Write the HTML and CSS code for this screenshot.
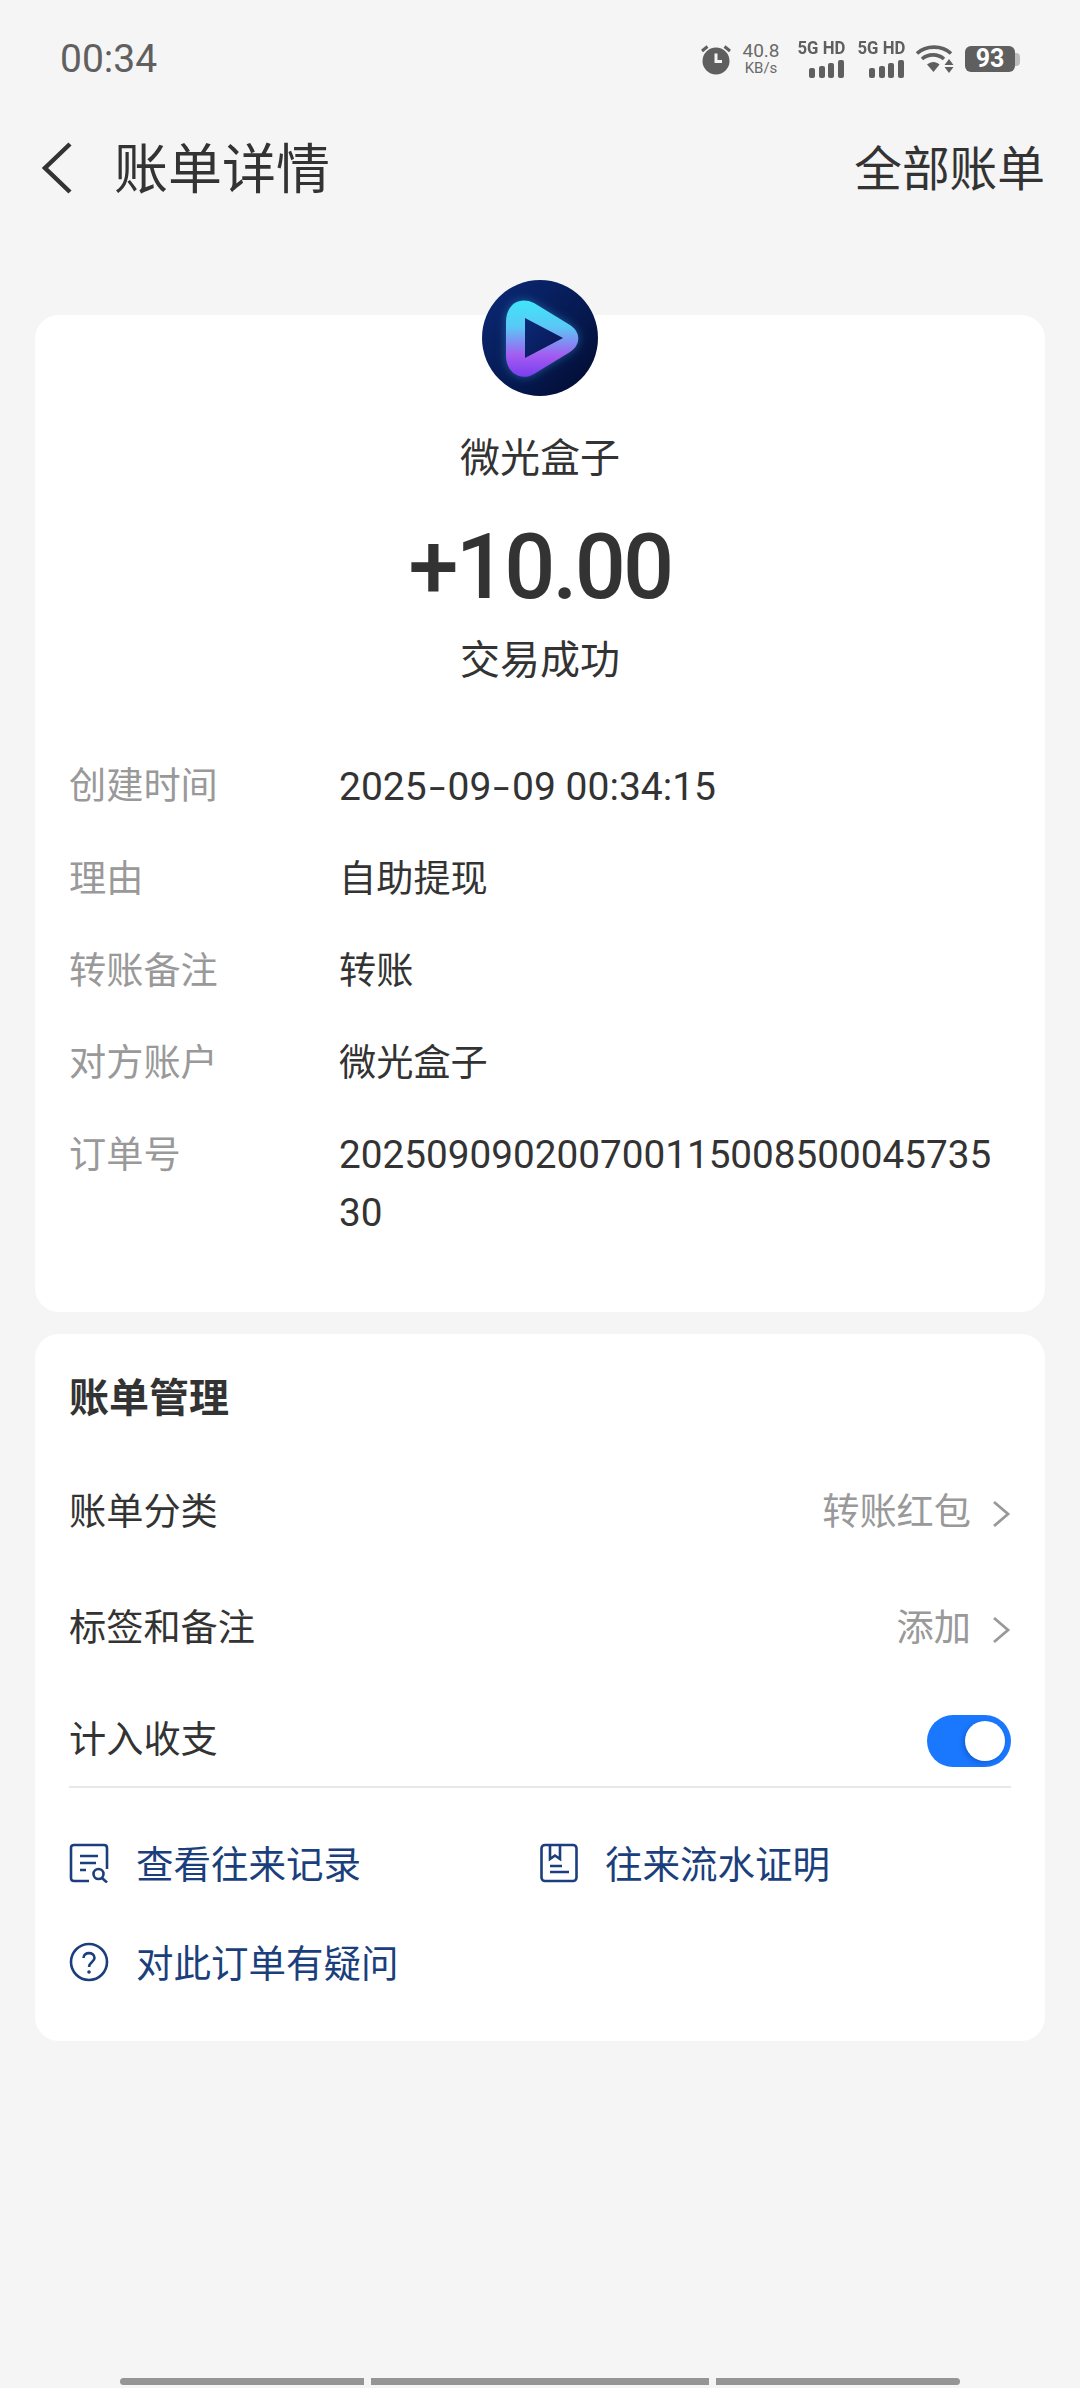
FILE: index.html
```html
<!DOCTYPE html>
<html lang="zh-CN">
<head>
<meta charset="utf-8">
<title>账单详情</title>
<link rel="stylesheet" href="styles.css">
</head>
<body>
<div class="page">
  <div class="status">
    <span class="time">00:34</span>
    <div class="status-icons">
      <svg class="alarm" width="32" height="32" viewBox="0 0 32 32"><circle cx="16" cy="18" r="13.5" fill="#5f5f5f"/><path d="M16 10.5V18.500H22" fill="none" stroke="#f5f5f5" stroke-width="3"/><path d="M2 8L7.500 3.500M30 8L24.500 3.500" stroke="#5f5f5f" stroke-width="3"/></svg>
      <div class="speed"><span class="speed-n">40.8</span><span class="speed-u">KB/s</span></div>
      <div class="sim"><span class="sim-t">5G HD</span>
        <svg width="36" height="18" viewBox="0 0 36 18"><g fill="#5f5f5f"><rect x="0" y="8" width="6" height="10" rx="2"/><rect x="10" y="6" width="6" height="12" rx="2"/><rect x="19" y="3" width="6" height="15" rx="2"/><rect x="29" y="0" width="6" height="18" rx="2"/></g></svg>
      </div>
      <div class="sim"><span class="sim-t">5G HD</span>
        <svg width="36" height="18" viewBox="0 0 36 18"><g fill="#5f5f5f"><rect x="0" y="8" width="6" height="10" rx="2"/><rect x="10" y="6" width="6" height="12" rx="2"/><rect x="19" y="3" width="6" height="15" rx="2"/><rect x="29" y="0" width="6" height="18" rx="2"/></g></svg>
      </div>
      <svg class="wifi" width="38" height="30" viewBox="0 0 38 30"><g fill="none" stroke="#5f5f5f" stroke-width="3.600"><path d="M1 9.500C10 1 26 1 35 9.500"/><path d="M6 15C12 9.500 22 9.500 28 15"/></g><path d="M11 20.500C15 17 20 17 23.500 20.500L17.500 28Z" fill="#5f5f5f"/><path d="M33 15L37.500 21H28.500ZM28.500 23H37.500L33 29Z" fill="#5f5f5f"/></svg>
      <div class="battery"><span class="batt-body">93</span><span class="batt-nub"></span></div>
    </div>
  </div>

  <header class="nav">
    <div class="nav-left">
      <svg class="back" width="32" height="52" viewBox="0 0 32 52"><path d="M30 2L5 26L30 50" fill="none" stroke="#333" stroke-width="4.500"/></svg>
      <h1 class="nav-title">账单详情</h1>
    </div>
    <span class="nav-action">全部账单</span>
  </header>

  <section class="card card-main">
    <svg class="logo" width="116" height="116" viewBox="0 0 116 116">
      <defs>
        <linearGradient id="bg" x1="0" y1="0" x2="1" y2="1"><stop offset="0" stop-color="#0b2a78"/><stop offset="0.55" stop-color="#061a52"/><stop offset="1" stop-color="#020a2e"/></linearGradient>
        <linearGradient id="play" gradientUnits="userSpaceOnUse" x1="50" y1="20" x2="50" y2="97"><stop offset="0" stop-color="#3fe6f8"/><stop offset="0.35" stop-color="#5ac8f6"/><stop offset="0.72" stop-color="#a35cf0"/><stop offset="1" stop-color="#7a3df0"/></linearGradient>
        <linearGradient id="hole" x1="0" y1="0" x2="1" y2="1"><stop offset="0" stop-color="#0a2a78"/><stop offset="1" stop-color="#0b1450"/></linearGradient>
        <filter id="glow" x="-30%" y="-30%" width="160%" height="160%"><feGaussianBlur stdDeviation="5"/></filter>
      </defs>
      <circle cx="58" cy="58" r="58" fill="url(#bg)"/>
      <path d="M24 42C24 24 38 16 52 23L88 45C99 52 99 65 88 72L52 94C38 102 24 92 24 76Z" fill="#3aa8f0" fill-opacity="0.45" filter="url(#glow)"/>
      <path d="M24 42C24 24 38 16 52 23L88 45C99 52 99 65 88 72L52 94C38 102 24 92 24 76Z" fill="url(#play)"/>
      <path d="M43 38L81 58L43 78Z" fill="url(#hole)"/>
    </svg>
    <div class="merchant">微光盒子</div>
    <div class="amount">+10.00</div>
    <div class="state">交易成功</div>
    <dl class="details">
      <div class="detail"><dt>创建时间</dt><dd class="num-date">2025<span class="sep">-</span>09<span class="sep">-</span>09 00:34:15</dd></div>
      <div class="detail"><dt>理由</dt><dd>自助提现</dd></div>
      <div class="detail"><dt>转账备注</dt><dd>转账</dd></div>
      <div class="detail"><dt>对方账户</dt><dd>微光盒子</dd></div>
      <div class="detail"><dt>订单号</dt><dd class="num-order">20250909020070011500850004573530</dd></div>
    </dl>
  </section>

  <section class="card card-manage">
    <h2 class="manage-title">账单管理</h2>
    <div class="row"><span class="row-label">账单分类</span><span class="row-right"><span class="row-value">转账红包</span><svg class="chev" width="19" height="28" viewBox="0 0 19 28"><path d="M2 2L16 14L2 26" fill="none" stroke="#999" stroke-width="2.800"/></svg></span></div>
    <div class="row"><span class="row-label">标签和备注</span><span class="row-right"><span class="row-value">添加</span><svg class="chev" width="19" height="28" viewBox="0 0 19 28"><path d="M2 2L16 14L2 26" fill="none" stroke="#999" stroke-width="2.800"/></svg></span></div>
    <div class="row row-toggle"><span class="row-label">计入收支</span><span class="toggle"><span class="knob"></span></span></div>
    <div class="links">
      <a class="link">
        <svg width="40" height="40" viewBox="0 0 40 40"><g fill="none" stroke="#1b3f7c" stroke-width="2.600"><path d="M20 38H5Q2 38 2 35V5Q2 2 5 2H35Q38 2 38 5V26"/><path d="M11 13H29M11 20H27M11 27H17"/><circle cx="29.500" cy="31" r="5"/><path d="M33 35L38 39.500"/></g></svg>
        <span class="link-text">查看往来记录</span>
      </a>
      <a class="link">
        <svg width="38" height="40" viewBox="0 0 38 40"><g fill="none" stroke="#1b3f7c" stroke-width="2.600"><rect x="1.500" y="2" width="35" height="36" rx="3.500"/><path d="M10 2V16L15 12.500L20 16V2"/><path d="M10 23H22M10 29H29"/></g></svg>
        <span class="link-text">往来流水证明</span>
      </a>
      <a class="link">
        <svg width="40" height="40" viewBox="0 0 40 40"><circle cx="20" cy="20" r="18" fill="none" stroke="#1b3f7c" stroke-width="2.600"/><path d="M14.500 16C14.500 9.500 25.500 9.500 25.500 16C25.500 20 20 20 20 25" fill="none" stroke="#1b3f7c" stroke-width="2.600"/><circle cx="20" cy="30" r="1.800" fill="#1b3f7c"/></svg>
        <span class="link-text">对此订单有疑问</span>
      </a>
    </div>
  </section>

  <div class="scroll-bar"><span class="seg seg-a"></span><span class="seg seg-b"></span><span class="seg seg-c"></span></div>
</div>
</body>
</html>
```
FILE: styles.css
```css
* { box-sizing: border-box; }
html, body { margin: 0; padding: 0; }
body {
  width: 1080px;
  height: 2388px;
  overflow: hidden;
  background: #f5f5f5;
  color: #333;
  font-family: "Noto Sans CJK SC", Roboto, sans-serif;
}
.page { display: flex; flex-direction: column; height: 2388px; }

/* status bar */
.status {
  height: 118px;
  flex: none;
  display: flex;
  align-items: center;
  justify-content: space-between;
  padding: 0 60px 0 60px;
}
.time { font: 400 39px/1 Roboto, sans-serif; color: #606060; }
.status-icons { display: flex; align-items: center; }
.alarm { margin-right: 9px; }
.speed { display: flex; flex-direction: column; align-items: center; width: 40px; margin-right: 14px; font-family: Roboto, sans-serif; color: #6a6a6a; }
.speed-n { font-size: 19px; line-height: 18px; }
.speed-u { font-size: 15px; line-height: 16px; }
.sim { display: flex; flex-direction: column; align-items: flex-end; width: 50px; margin-right: 10px; }
.sim-t { font: 700 19px/18px Roboto, sans-serif; color: #5f5f5f; white-space: nowrap; transform: scaleX(0.88); transform-origin: right; margin: -2px 0 3px; }
.wifi { margin: 0 11px 0 1px; }
.battery { display: flex; align-items: center; }
.batt-body {
  width: 50px; height: 26px;
  background: #5f5f5f;
  border-radius: 6px;
  color: #fff;
  font: 700 25px/26px Roboto, sans-serif;
  text-align: center;
}
.batt-nub { width: 5px; height: 13px; background: #bdbdbd; border-radius: 0 4px 4px 0; }

/* nav */
.nav {
  height: 100px;
  flex: none;
  display: flex;
  align-items: center;
  justify-content: space-between;
  padding: 0 35px 0 40px;
}
.nav-left { display: flex; align-items: center; }
.back { margin-right: 42px; }
.nav-title { margin: 0 0 5px; font-size: 54px; font-weight: 400; line-height: 70px; }
.nav-action { font-size: 47.700px; line-height: 70px; margin-bottom: 4px; }

/* cards */
.card { background: #fff; border-radius: 24px; margin: 0 35px; flex: none; }
.card-main { margin-top: 97px; padding: 0 34px 70px; display: flex; flex-direction: column; }
.logo { display: block; margin: -35px auto 0; }
.merchant, .state { text-align: center; font-size: 40px; line-height: 50px; }
.merchant { margin-top: 34px; }
.amount { margin-top: 38px; text-align: center; font: 500 90px/100px Roboto, sans-serif; letter-spacing: -2.800px; }
.state { margin-top: 14px; }

.details { margin: 75px 0 0; display: flex; flex-direction: column; gap: 34px; }
.detail { display: grid; grid-template-columns: 270px 1fr; min-height: 58px; font-size: 37.200px; line-height: 52px; }
.detail dt { color: #999; }
.detail dd { margin: 0; color: #333; }
.num-date { font: 400 39px/58px Roboto, sans-serif; padding-top: 1px; }
.num-order { font: 400 38.700px/58px Roboto, sans-serif; word-break: break-all; }
.sep { display: inline-block; margin: 0 5px; transform: scaleX(1.5); }

.card-manage { margin-top: 22px; padding: 36px 34px 49px; }
.manage-title { margin: 0 0 33px; font-size: 40px; font-weight: 700; line-height: 50px; }
.row { height: 116px; display: flex; align-items: center; justify-content: space-between; font-size: 37.200px; }
.row-label, .row-value { padding-bottom: 5px; }
.row-right { display: flex; align-items: center; gap: 21px; }
.chev { margin-top: 5px; }
.row-value { color: #999; }
.row-toggle { height: 103px; padding-top: 10px; border-bottom: 2px solid #e8e8e8; }
.row-toggle .row-label { padding-bottom: 7px; }
.toggle {
  width: 84px; height: 52px;
  border-radius: 26px;
  background: #1a78ff;
  display: flex;
  align-items: center;
  justify-content: flex-end;
  padding-right: 6px;
}
.knob { width: 40px; height: 40px; border-radius: 50%; background: #fff; box-shadow: -2px 2px 5px rgba(0, 40, 120, 0.3); }

.links {
  margin-top: 45px;
  display: grid;
  grid-template-columns: 471px 1fr;
  row-gap: 39px;
}
.link { display: flex; align-items: center; gap: 27px; height: 60px; font-size: 37.500px; color: #1b3f7c; }
.link svg { flex: none; }
.link-text { padding-bottom: 3px; }

/* bottom indicator */
.scroll-bar { margin: auto 120px 3px; display: flex; gap: 7px; height: 7px; }
.seg { background: #959595; display: block; height: 7px; }
.seg-a { width: 244px; border-radius: 4px 0 0 4px; }
.seg-b { width: 338px; }
.seg-c { width: 244px; border-radius: 0 4px 4px 0; }
```
